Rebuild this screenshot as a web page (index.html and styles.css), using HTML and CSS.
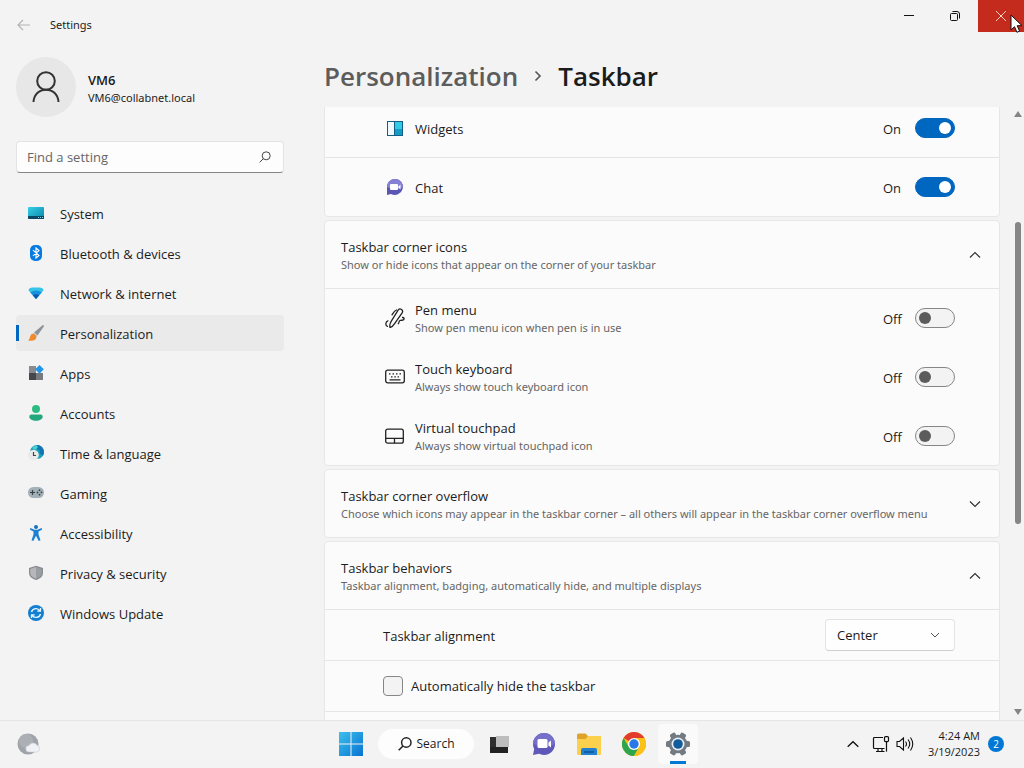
FILE: index.html
```
<!DOCTYPE html>
<html lang="en">
<head>
    <meta charset="UTF-8">
    <meta name="viewport" content="width=device-width, initial-scale=1.0">
    <title>Settings</title>
    <link rel="stylesheet" href="styles.css">
</head>
<body>
    <div class="window">
        <header class="titlebar">
            <button class="back" aria-label="Back">
                <svg width="14" height="12" viewBox="0 0 14 12" fill="none" stroke="#b4b4b4" stroke-width="1.2"><path d="M6 1 1 6l5 5M1 6h12"/></svg>
            </button>
            <span class="window-title">Settings</span>
            <div class="window-controls">
                <button aria-label="Minimize"><svg width="12" height="12" viewBox="0 0 12 12"><path d="M1 5.5h10" stroke="#111"/></svg></button>
                <button aria-label="Restore"><svg width="12" height="12" viewBox="0 0 12 12" fill="none" stroke="#111"><rect x="1.5" y="3.5" width="7" height="7" rx="1"/><path d="M3.5 1.5H8a2.500 2.500 0 0 1 2.500 2.500v4.500"/></svg></button>
                <button class="close" aria-label="Close"><svg width="12" height="12" viewBox="0 0 12 12"><path d="m1 1 10 10M11 1 1 11" stroke="#f5d5c8"/></svg></button>
            </div>
        </header>

        <div class="columns">
            <aside class="sidebar">
                <div class="profile">
                    <div class="avatar">
                        <svg width="28" height="32" viewBox="0 0 28 32" fill="none" stroke="#333" stroke-width="2"><circle cx="14" cy="10" r="8.800"/><path d="M1.500 31C2 23.500 7 18.800 14 18.800S26 23.500 26.500 31"/></svg>
                    </div>
                    <div class="profile-text">
                        <strong>VM6</strong>
                        <span>VM6@collabnet.local</span>
                    </div>
                </div>

                <div class="search">
                    <input type="text" placeholder="Find a setting" aria-label="Find a setting">
                    <svg width="12" height="12" viewBox="0 0 12 12" fill="none" stroke="#444"><circle cx="7.200" cy="4.800" r="4"/><path d="M4.300 7.700.6 11.400"/></svg>
                </div>

                <nav class="menu">
                    <a href="#">
                        <svg width="16" height="16" viewBox="0 0 16 16"><defs><linearGradient id="sys" x1="0" y1="0" x2="1" y2="1"><stop offset="0" stop-color="#35cfe8"/><stop offset="1" stop-color="#0a85a8"/></linearGradient></defs><rect y="2" width="16" height="12" rx="1" fill="url(#sys)"/><path d="M0 11h16v2a1 1 0 0 1-1 1H1a1 1 0 0 1-1-1z" fill="#0c4763"/><path d="M10 12.500h1m1 0h1m1 0h1" stroke="#7fd4e4"/></svg>
                        System
                    </a>
                    <a href="#">
                        <svg width="16" height="16" viewBox="0 0 16 16"><rect x="2" width="12" height="16" rx="5" fill="#087be0"/><path d="m5 5.200 6 5.300L8 13V3l3 2.500-6 5.300" fill="none" stroke="#fff" stroke-width="1.100"/></svg>
                        Bluetooth &amp; devices
                    </a>
                    <a href="#">
                        <svg width="16" height="16" viewBox="0 0 16 16"><path d="M.4 5.200Q1 3 4 2.600h8q3 .4 3.600 2.600L8 14z" fill="#35c3e8"/><path d="M2.300 7.400Q8 3.400 13.700 7.400L8 14z" fill="#1590dc"/><path d="M4.800 10.300Q8 8 11.200 10.300L8 14z" fill="#0a58a8"/></svg>
                        Network &amp; internet
                    </a>
                    <a href="#" class="current">
                        <svg width="16" height="16" viewBox="0 0 16 16"><path d="M14.500.2c1-.5 1.800.3 1.300 1.300L9.500 10.500 6 7.500z" fill="#8c949b"/><path d="m6 7.500 3.500 3-1.300 1.500L4.700 9z" fill="#c7ccd0"/><path d="M4.900 8.700c2 .1 3.700 1.700 3.500 3.500-.3 3-4 4.200-8.200 3.200C2.300 14.200 1.500 9 4.900 8.700z" fill="#ef8b2c"/></svg>
                        Personalization
                    </a>
                    <a href="#">
                        <svg width="16" height="16" viewBox="0 0 16 16"><path d="M1 1h7v7H1z" fill="#888b8f"/><path d="M1 8h7v7H1z" fill="#45484b"/><path d="M8 8h7v7H8z" fill="#777b7f"/><path d="m11.500 0 4.300 4.300-4.300 4.400-4.300-4.400z" fill="#2295e6"/></svg>
                        Apps
                    </a>
                    <a href="#">
                        <svg width="16" height="16" viewBox="0 0 16 16"><circle cx="8" cy="4" r="4" fill="#2dbb83"/><path d="M3.500 9.500h9c1.300 0 2.200.8 2.200 2 0 2.500-2.700 4.300-6.700 4.300s-6.700-1.800-6.700-4.300c0-1.200.9-2 2.200-2z" fill="#24a77c"/></svg>
                        Accounts
                    </a>
                    <a href="#">
                        <svg width="16" height="16" viewBox="0 0 16 16"><circle cx="9" cy="7" r="7" fill="#18a1b7"/><path d="M9 0a7 7 0 0 1 6 10.500Q10 9 12 5.500 8 5 9 0z" fill="#1374b4"/><path d="M4 3q4-4 6-1L7 5z" fill="#50d0ce"/><circle cx="5.500" cy="10" r="5.300" fill="#e7e9eb"/><path d="M5.500 7v3.500H8" fill="none" stroke="#444" stroke-width="1.200"/></svg>
                        Time &amp; language
                    </a>
                    <a href="#">
                        <svg width="16" height="16" viewBox="0 0 16 16"><rect y="2" width="16" height="11" rx="5.500" fill="#a3b0b7"/><path d="M2 7.500h5M4.500 5v5" stroke="#394247" stroke-width="1.200"/><g fill="#394247"><circle cx="11.500" cy="5.200" r=".9"/><circle cx="13.500" cy="7.300" r=".9"/><circle cx="9.500" cy="7.500" r=".9"/><circle cx="11.500" cy="9.700" r=".9"/></g></svg>
                        Gaming
                    </a>
                    <a href="#">
                        <svg width="16" height="16" viewBox="0 0 16 16"><circle cx="8" cy="2" r="2" fill="#1771bf"/><path d="m2.500 3 4 1.700h3l4-1.700.8 1.500L10.500 6.500v3l2 5.800-1.800.6L8 10.800 5.300 15.900l-1.800-.6 2-5.800v-3L1.700 4.500z" fill="#1b80d3"/></svg>
                        Accessibility
                    </a>
                    <a href="#">
                        <svg width="16" height="16" viewBox="0 0 16 16"><path d="M8 .7 1 3v4.500c0 4 2.500 6 7 7.500 4.500-1.500 7-3.500 7-7.500V3z" fill="#888b8f"/><path d="M8 2 2.200 4v3.500c0 3.300 2 4.800 5.800 6.200z" fill="#b5b7ba"/><path d="m8 2 5.800 2v3.500c0 3.300-2 4.800-5.800 6.200z" fill="#9b9ea1"/></svg>
                        Privacy &amp; security
                    </a>
                    <a href="#">
                        <svg width="16" height="16" viewBox="0 0 16 16" fill="none"><circle cx="8" cy="8" r="8" fill="#147fd0"/><path d="M3.500 7c1-4 6.500-4.500 8.500-1.200M12.500 9c-1 4-6.500 4.500-8.500 1.200M12.500 3v3.200H9.300M3.500 13V9.800h3.200" stroke="#e6f6ff" stroke-width="1.300"/></svg>
                        Windows Update
                    </a>
                </nav>
            </aside>

            <main class="main">
                <div class="breadcrumb">
                    <a href="#">Personalization</a>
                    <svg width="8" height="12" viewBox="0 0 8 12" fill="none" stroke="#555" stroke-width="1.600"><path d="m1.500 1.500 4.500 4.500-4.500 4.500"/></svg>
                    <h1>Taskbar</h1>
                </div>

                <div class="scroll-area">
                    <div class="panel-view">
                        <div class="panels">
                            <section class="panel">
                                <div class="row">
                                    <svg class="row-icon" width="20" height="20" viewBox="0 0 20 20"><rect x="2.500" y="3.500" width="15" height="14" fill="#effaff" stroke="#155d87"/><path d="M10 4h7v13h-7z" fill="#139dc4"/><path d="M10 4h7v7h-7z" fill="#31cbe5"/><path d="M9.500 4v13" stroke="#155d87"/></svg>
                                    <label class="row-text" for="widgets">Widgets</label>
                                    <span class="state">On</span>
                                    <input class="toggle" type="checkbox" id="widgets" checked>
                                </div>
                                <div class="row divided">
                                    <svg class="row-icon" width="20" height="20" viewBox="0 0 20 20"><path d="M10 2a8 8 0 1 1-4 15l-4 1V10a8 8 0 0 1 8-8z" fill="#5b55b3"/><path d="M10 2a8 8 0 0 1 8 8q-6 5-16 0a8 8 0 0 1 8-8z" fill="#8580d4"/><rect x="5" y="7" width="8" height="6" rx="1" fill="#fff"/><path d="m13.500 9.500 2-2v5l-2-2z" fill="#fff"/></svg>
                                    <label class="row-text" for="chat">Chat</label>
                                    <span class="state">On</span>
                                    <input class="toggle" type="checkbox" id="chat" checked>
                                </div>
                            </section>

                            <section class="panel">
                                <button class="panel-head" aria-expanded="true">
                                    <span class="row-text">Taskbar corner icons<small>Show or hide icons that appear on the corner of your taskbar</small></span>
                                    <svg width="12" height="8" viewBox="0 0 12 8" fill="none" stroke="#333" stroke-width="1.200"><path d="m1 6.500 5-5 5 5"/></svg>
                                </button>
                                <div class="row divided">
                                    <svg class="row-icon" width="20" height="20" viewBox="0 0 20 20" fill="none" stroke="#222" stroke-width="1.300" stroke-linecap="round"><path d="M13.600 1.500c1.600-1.500 5 .5 3.700 3.100L9.800 15.300c-1 1.500-3.100 3.800-4.800 4.200-.5-2 .3-4.700 1.300-6.300z"/><path d="M11.500 2C9 3 8.200 5 7 6.800M3 12.800c-2.500.5-3 4.700-.5 5.600M17.500 9.500c1.500-.2 2.200 1.500.8 2.400-1 .7-2.200 0-3.300.6-1.500.8-.6 2.500-1.800 3.200"/></svg>
                                    <label class="row-text" for="pen">Pen menu<small>Show pen menu icon when pen is in use</small></label>
                                    <span class="state">Off</span>
                                    <input class="toggle" type="checkbox" id="pen">
                                </div>
                                <div class="row">
                                    <svg class="row-icon" width="20" height="20" viewBox="0 0 20 20" fill="none" stroke="#222" stroke-width="1.300"><rect x=".7" y="3.200" width="18.600" height="12.600" rx="2"/><path d="M4 6.800h1.500m2 0H9m2 0h1.500m2 0H16M6 9.800h1.500m1.800 0h1.500m1.800 0H14M4.500 12.800h11"/></svg>
                                    <label class="row-text" for="keyboard">Touch keyboard<small>Always show touch keyboard icon</small></label>
                                    <span class="state">Off</span>
                                    <input class="toggle" type="checkbox" id="keyboard">
                                </div>
                                <div class="row">
                                    <svg class="row-icon" width="20" height="20" viewBox="0 0 20 20" fill="none" stroke="#222" stroke-width="1.300"><rect x=".7" y="3.200" width="17.600" height="14" rx="2"/><path d="M1 12.300h17.500M9.500 12.300v5"/></svg>
                                    <label class="row-text" for="touchpad">Virtual touchpad<small>Always show virtual touchpad icon</small></label>
                                    <span class="state">Off</span>
                                    <input class="toggle" type="checkbox" id="touchpad">
                                </div>
                            </section>

                            <section class="panel">
                                <button class="panel-head" aria-expanded="false">
                                    <span class="row-text">Taskbar corner overflow<small>Choose which icons may appear in the taskbar corner – all others will appear in the taskbar corner overflow menu</small></span>
                                    <svg width="12" height="8" viewBox="0 0 12 8" fill="none" stroke="#333" stroke-width="1.200"><path d="m1 1.500 5 5 5-5"/></svg>
                                </button>
                            </section>

                            <section class="panel">
                                <button class="panel-head" aria-expanded="true">
                                    <span class="row-text">Taskbar behaviors<small>Taskbar alignment, badging, automatically hide, and multiple displays</small></span>
                                    <svg width="12" height="8" viewBox="0 0 12 8" fill="none" stroke="#333" stroke-width="1.200"><path d="m1 6.500 5-5 5 5"/></svg>
                                </button>
                                <div class="row compact divided">
                                    <label class="row-text" for="alignment">Taskbar alignment</label>
                                    <div class="dropdown">
                                        <select id="alignment">
                                            <option>Center</option>
                                            <option>Left</option>
                                        </select>
                                        <svg width="10" height="6" viewBox="0 0 10 6" fill="none" stroke="#555"><path d="m1 1 4 4 4-4"/></svg>
                                    </div>
                                </div>
                                <div class="row compact divided">
                                    <input class="check" type="checkbox" id="autohide">
                                    <label for="autohide">Automatically hide the taskbar</label>
                                </div>
                                <div class="row compact divided"></div>
                            </section>
                        </div>
                    </div>
                    <div class="scrollbar">
                        <svg width="8" height="6" viewBox="0 0 8 6" fill="#858585"><path d="M4 0 8 6H0z"/></svg>
                        <div class="track">
                            <div class="thumb"></div>
                        </div>
                        <svg width="8" height="6" viewBox="0 0 8 6" fill="#858585"><path d="M4 6 0 0h8z"/></svg>
                    </div>
                </div>
            </main>
        </div>
    </div>

    <footer class="taskbar">
        <button class="weather" aria-label="Weather">
            <svg width="24" height="24" viewBox="0 0 24 24"><circle cx="11" cy="12" r="10.500" fill="#a0a4aa"/><circle cx="9" cy="9" r="7" fill="#acb0b5"/><path d="M12 20a3.200 3.200 0 0 1 0-6.400 4.500 4.500 0 0 1 8-.4 3.500 3.500 0 0 1 0 6.800z" fill="#f0f2f7" stroke="#c6cad2" stroke-width=".6"/></svg>
        </button>

        <div class="apps">
            <button class="start" aria-label="Start">
                <svg width="24" height="24" viewBox="0 0 24 24"><defs><linearGradient id="win" x1="0" y1="0" x2="1" y2="1"><stop offset="0" stop-color="#3cc0ee"/><stop offset="1" stop-color="#0873d0"/></linearGradient></defs><path d="M0 0h11.500v11.500H0zM12.500 0H24v11.500H12.500zM0 12.500h11.500V24H0zM12.500 12.500H24V24H12.500z" fill="url(#win)"/></svg>
            </button>
            <button class="search-button">
                <svg width="14" height="14" viewBox="0 0 14 14" fill="none" stroke="#222" stroke-width="1.500"><circle cx="8.300" cy="5.500" r="4.700"/><path d="M5 8.900.7 13.300"/></svg>
                Search
            </button>
            <button aria-label="Task view">
                <svg width="24" height="24" viewBox="0 0 24 24"><path d="M3 5h14v16H3z" fill="#2f2f2f"/><path d="M3 15h18v6H3z" fill="#222"/><path d="M9 4h13v11H9z" fill="#bdbdbd"/></svg>
            </button>
            <button aria-label="Chat">
                <svg width="24" height="24" viewBox="0 0 24 24"><path d="M12 1a11 11 0 1 1-5 20.800L1 23l1.200-6A11 11 0 0 1 12 1z" fill="#5f58b8"/><path d="M12 1a11 11 0 0 1 11 11q-9 6-22 0A11 11 0 0 1 12 1z" fill="#7670ca"/><rect x="5.500" y="7" width="10" height="9" rx="1.500" fill="#fff"/><path d="m16.500 10.500 2.500-2v7l-2.500-2z" fill="#fff"/></svg>
            </button>
            <button aria-label="File Explorer">
                <svg width="24" height="24" viewBox="0 0 24 24"><path d="M0 3a1.500 1.500 0 0 1 1.500-1.500h7L11 4h11.500A1.500 1.500 0 0 1 24 5.500V9H0z" fill="#dfa22a"/><path d="M0 7h8.500L11 4h13v17.500a1.500 1.500 0 0 1-1.500 1.500h-21A1.500 1.500 0 0 1 0 21.500z" fill="#fbd04d"/><path d="M4 23v-5a2 2 0 0 1 2-2h12a2 2 0 0 1 2 2v5z" fill="#2181cf"/><path d="M7 19h10v2H7z" fill="#105fa6"/></svg>
            </button>
            <button aria-label="Chrome">
                <svg width="24" height="24" viewBox="0 0 24 24"><circle cx="12" cy="12" r="12" fill="#fbc116"/><path d="M12 12 1.600 6A12 12 0 0 1 22.400 6z" fill="#e33b2e"/><path d="M1.600 6A12 12 0 0 0 12 24l5.200-9L12 12 6.800 15z" fill="#2da44e"/><path d="M12 6h10.400A12 12 0 0 1 12 24l5.200-9z" fill="#fbc116"/><circle cx="12" cy="12" r="6" fill="#fff"/><circle cx="12" cy="12" r="4.700" fill="#2878e8"/></svg>
            </button>
            <button class="open" aria-label="Settings">
                <svg width="24" height="24" viewBox="0 0 24 24"><g fill="#737a81"><circle cx="12" cy="12" r="9.300"/><rect x="9" width="6" height="24" rx="1.500" transform="rotate(30 12 12)"/><rect x="9" width="6" height="24" rx="1.500" transform="rotate(90 12 12)"/><rect x="9" width="6" height="24" rx="1.500" transform="rotate(150 12 12)"/></g><circle cx="12" cy="12" r="6.500" fill="#e8eff5"/><circle cx="12" cy="12" r="4.800" fill="#125b9d"/></svg>
            </button>
        </div>

        <div class="tray">
            <button aria-label="Show hidden icons"><svg width="12" height="8" viewBox="0 0 12 8" fill="none" stroke="#111" stroke-width="1.300"><path d="m.7 6.700 5.300-5 5.300 5"/></svg></button>
            <button aria-label="Network"><svg width="18" height="16" viewBox="0 0 18 16" fill="none" stroke="#111" stroke-width="1.200"><path d="M11 1.500H2.500a1 1 0 0 0-1 1v9a1 1 0 0 0 1 1h10M6 12.500v3m-2 0h8.500M10 12.500v3"/><rect x="12.500" y=".6" width="4" height="5" rx="1"/><path d="M14.500 5.600v10"/></svg></button>
            <button aria-label="Volume"><svg width="18" height="16" viewBox="0 0 18 16" fill="none" stroke="#111" stroke-width="1.100"><path d="M1 5.500h2.500L7.500 2v12l-4-3.500H1zM9.500 5.500q2 2.500 0 5M12 3.500q3.500 4.500 0 9M14.500 1.500q4.500 6.500 0 13"/></svg></button>
            <div class="clock"><span>4:24 AM</span><span>3/19/2023</span></div>
            <span class="badge">2</span>
        </div>
    </footer>

    <svg class="cursor" width="13" height="20" viewBox="0 0 13 20"><path d="M1 1v15l3.500-3.300 2.400 5.600 2.700-1.200-2.400-5.400H12z" fill="#fff" stroke="#111"/></svg>
</body>
</html>
```
FILE: styles.css
```
* {
    box-sizing: border-box;
}
body {
    font-family: "Open Sans", "Noto Sans", sans-serif;
    font-size: 13px;
    line-height: 18px;
    color: #1b1b1b;
    background-color: #f3f3f3;
    display: flex;
    flex-direction: column;
    height: 100vh;
    margin: 0;
    overflow: hidden;
}
button, input, select {
    font: inherit;
    color: inherit;
}
button {
    background: none;
    border: none;
    padding: 0;
}
a {
    color: inherit;
    text-decoration: none;
}
svg {
    display: block;
    flex: none;
}
.window {
    flex: 1;
    min-height: 0;
    display: flex;
    flex-direction: column;
}

/* title bar */
.titlebar {
    display: flex;
    align-items: center;
    height: 49px;
    padding-left: 17px;
    flex: none;
}
.back {
    width: 33px;
}
.window-title, .profile-text span, .row-text small {
    font-family: "Noto Sans", "Open Sans", sans-serif;
    font-size: 11px;
}
.window-controls {
    display: flex;
    align-self: flex-start;
    margin-left: auto;
}
.window-controls button {
    display: flex;
    align-items: center;
    justify-content: center;
    width: 46px;
    height: 32px;
}
.window-controls .close {
    background-color: #c42b1c;
}

.columns {
    flex: 1;
    min-height: 0;
    display: flex;
}

/* sidebar */
.sidebar {
    width: 300px;
    flex: none;
    padding: 8px 16px 0;
}
.profile {
    display: flex;
    align-items: center;
    gap: 12px;
}
.avatar {
    display: flex;
    align-items: center;
    justify-content: center;
    width: 60px;
    height: 60px;
    border-radius: 50%;
    background-color: #e7e7e7;
}
.profile-text {
    display: flex;
    flex-direction: column;
    padding-top: 3px;
}
.profile-text strong {
    font-weight: 600;
}
.search {
    display: flex;
    align-items: center;
    height: 32px;
    margin: 24px 0 22px;
    padding-right: 12px;
    background-color: #fdfdfd;
    border: 1px solid #e3e3e3;
    border-bottom-color: #868686;
    border-radius: 4px;
}
.search input {
    flex: 1;
    min-width: 0;
    padding: 0 10px;
    border: none;
    background: none;
    outline: none;
}
.search input::placeholder {
    color: #666;
}
.menu a {
    display: flex;
    align-items: center;
    gap: 16px;
    height: 36px;
    margin-bottom: 4px;
    padding: 2px 0 0 12px;
    border-radius: 4px;
}
.menu svg {
    margin-bottom: 3px;
}
.menu .current {
    background: linear-gradient(#0067c0, #0067c0) left center / 3px 16px no-repeat #eaeaea;
}

/* settings page */
.main {
    flex: 1;
    min-width: 0;
    display: flex;
    flex-direction: column;
    padding-left: 24px;
}
.breadcrumb {
    display: flex;
    align-items: center;
    height: 58px;
    padding-bottom: 5px;
    gap: 16px;
    font-size: 26px;
    font-weight: 600;
    line-height: 36px;
    color: #5c5c5c;
}
.breadcrumb h1 {
    margin: 0;
    font-size: inherit;
    font-weight: inherit;
    color: #1b1b1b;
}
.scroll-area {
    flex: 1;
    min-height: 0;
    display: flex;
}
.panel-view {
    flex: 1;
    min-width: 0;
    overflow: hidden;
}
.panels {
    display: flex;
    flex-direction: column;
    gap: 3px;
    margin-top: -10px;
}
.panel {
    background-color: #fbfbfb;
    border: 1px solid #e7e7e7;
    border-radius: 4px;
}
.panel-head {
    display: flex;
    align-items: center;
    width: 100%;
    height: 67px;
    padding: 0 18px 0 16px;
    text-align: left;
}
.row {
    display: flex;
    align-items: center;
    min-height: 59px;
    padding: 0 44px 0 60px;
}
.row.divided {
    border-top: 1px solid #e5e5e5;
}
.row.compact {
    min-height: 51px;
    padding-left: 58px;
}
.row-icon {
    margin-right: 10px;
}
.row-text {
    flex: 1;
    min-width: 0;
}
.row-text, .state {
    padding-top: 2px;
}
.row-text small {
    display: block;
    color: #666;
    white-space: nowrap;
}
.state {
    width: 32px;
}
.toggle {
    appearance: none;
    width: 40px;
    height: 20px;
    margin: 0;
    padding: 3px;
    border: 1px solid #868686;
    border-radius: 10px;
    background-color: #f3f3f3;
}
.toggle::before {
    content: "";
    display: block;
    width: 12px;
    height: 12px;
    border-radius: 50%;
    background-color: #5c5c5c;
}
.toggle:checked {
    border-color: #0067c0;
    background-color: #0067c0;
}
.toggle:checked::before {
    margin-left: auto;
    background-color: #fff;
}
.dropdown {
    display: grid;
    align-items: center;
    width: 130px;
}
.dropdown select, .dropdown svg {
    grid-area: 1 / 1;
}
.dropdown svg {
    justify-self: end;
    margin-right: 15px;
    pointer-events: none;
}
.dropdown select {
    appearance: none;
    width: 100%;
    height: 32px;
    padding: 0 11px;
    border: 1px solid #e3e3e3;
    border-bottom-color: #cfcfcf;
    border-radius: 4px;
    background-color: #fefefe;
}
.check {
    appearance: none;
    width: 20px;
    height: 20px;
    margin: 0 8px 0 0;
    border: 1px solid #868686;
    border-radius: 4px;
    background-color: #f3f3f3;
}
.scrollbar {
    display: flex;
    flex-direction: column;
    align-items: center;
    gap: 8px;
    width: 12px;
    margin-left: 12px;
    padding: 4px 0 5px;
}
.track {
    flex: 1;
    display: flex;
    flex-direction: column;
}
.track::before {
    content: "";
    flex: 17;
}
.track::after {
    content: "";
    flex: 31;
}
.thumb {
    flex: 53;
    width: 6px;
    border-radius: 3px;
    background-color: #868686;
}

/* taskbar */
.taskbar {
    display: grid;
    grid-template-columns: 1fr auto 1fr;
    align-items: center;
    height: 48px;
    flex: none;
    padding-bottom: 1px;
    border-top: 1px solid #e5e5e5;
    background-color: #f3f3f3;
}
.weather {
    justify-self: start;
    margin-left: 17px;
}
.apps {
    display: flex;
    align-items: center;
    padding-left: 2px;
}
.apps button {
    display: flex;
    align-items: center;
    justify-content: center;
    width: 45px;
    height: 40px;
}
.apps .search-button {
    gap: 5px;
    width: 96px;
    height: 30px;
    margin: 0 2px 0 5px;
    border-radius: 15px;
    background-color: #fdfdfd;
    font-size: 12px;
}
.apps .open {
    width: 40px;
    margin-left: 2px;
    border-radius: 4px;
    background: linear-gradient(#0078d4, #0078d4) center bottom / 16px 3px no-repeat #fafafa;
}
.tray {
    justify-self: end;
    display: flex;
    align-items: center;
    margin-right: 20px;
}
.tray button {
    margin-right: 6px;
}
.tray button:first-child {
    margin-right: 13px;
}
.clock {
    display: flex;
    flex-direction: column;
    align-items: flex-end;
    margin: 0 8px;
    font-size: 11px;
    line-height: 16px;
}
.badge {
    width: 16px;
    height: 16px;
    border-radius: 50%;
    background-color: #0078d4;
    color: #fff;
    font-size: 10px;
    line-height: 16px;
    text-align: center;
}

.cursor {
    position: absolute;
    top: 14px;
    right: 1px;
}
```
